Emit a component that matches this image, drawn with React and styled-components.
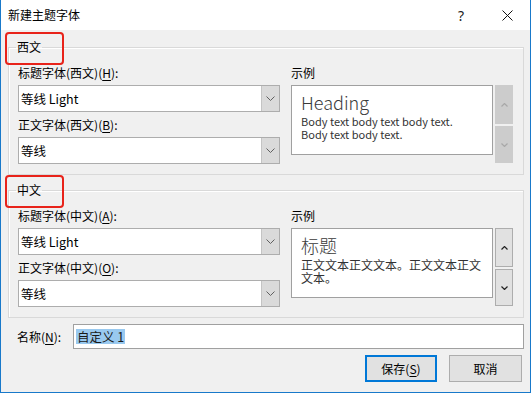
import React from "react";
import styled, { createGlobalStyle } from "styled-components";

const Global = createGlobalStyle`
  html, body { margin: 0; padding: 0; background: #ffffff; }
  body { font-family: "Noto Sans CJK SC", "Noto Sans", sans-serif; font-size: 12px; color: #000; }
  * { box-sizing: border-box; }
`;

const Window = styled.div`
  width: 531px;
  height: 393px;
  display: flex;
  flex-direction: column;
  border-left: 1px solid #1979ca;
  border-right: 1px solid #1979ca;
  border-bottom: 1px solid #1979ca;
  background: #f0f0f0;
`;

const TitleBar = styled.div`
  height: 30px;
  flex: none;
  display: flex;
  align-items: center;
  background: #ffffff;
  padding-left: 7px;
`;

const Title = styled.div`
  flex: 1;
  font-size: 12px;
  line-height: 16px;
  color: #000;
`;

const TitleButton = styled.div`
  width: 46px;
  height: 30px;
  display: flex;
  align-items: center;
  justify-content: center;
  font-family: "Noto Sans", sans-serif;
  font-size: 14px;
  color: #222;
`;

const Body = styled.div`
  flex: 1;
  display: flex;
  flex-direction: column;
  padding: 9px 6px 10px 7px;
`;

const Group = styled.fieldset`
  margin: ${(p) => (p.$first ? "0" : "7px 0 0 0")};
  padding: 0 10px 10px 9px;
  border: 1px solid #d9d9d9;
  box-shadow: inset 1px 1px 0 #ffffff;
  min-inline-size: 0;
`;

const Legend = styled.legend`
  position: relative;
  margin-left: -2px;
  padding: 0 1px;
  font-size: 12px;
  line-height: 16px;
  color: #000;
  &::before {
    content: "";
    position: absolute;
    left: -11px;
    top: -7px;
    width: 55px;
    height: 29px;
    border: 2px solid #e8231a;
    border-radius: 4px;
  }
`;

const Columns = styled.div`
  display: grid;
  grid-template-columns: 262px 1fr;
  column-gap: 11px;
`;

const Column = styled.div`
  display: flex;
  flex-direction: column;
`;

const FieldLabel = styled.div`
  font-size: 12px;
  line-height: 16px;
  margin-top: ${(p) => (p.$first ? "10px" : "5px")};
  margin-bottom: 4px;
  white-space: nowrap;
  color: #000;
`;

const U = styled.span`
  text-decoration: underline;
  text-underline-offset: 2px;
`;

const Combo = styled.div`
  height: 27px;
  display: flex;
  border: 1px solid #adadad;
  background: #ffffff;
`;

const ComboText = styled.div`
  flex: 1;
  display: flex;
  align-items: center;
  padding-left: 2px;
  font-size: 12.5px;
  color: #000;
`;

const DropButton = styled.div`
  width: 18px;
  display: flex;
  align-items: center;
  justify-content: center;
  background: #dadada;
  border-left: 1px solid #c4c4c4;
`;

const PreviewRow = styled.div`
  display: flex;
  gap: 2px;
`;

const Preview = styled.div`
  width: 202px;
  height: 70px;
  background: #ffffff;
  border: 1px solid #a0a0a0;
  padding: 5px 8px 0 9px;
  color: #333;
`;

const PreviewHeading = styled.div`
  font-size: 18px;
  line-height: 22px;
  font-weight: 300;
  color: #3a3a3a;
`;

const PreviewBody = styled.div`
  font-size: ${(p) => (p.$cjk ? "12px" : "11px")};
  line-height: 13px;
  margin-top: 2px;
  color: #333;
`;

const ScrollCol = styled.div`
  width: 18px;
  display: flex;
  flex-direction: column;
  gap: 2px;
`;

const ScrollButton = styled.div`
  height: ${(p) => p.$h}px;
  display: flex;
  align-items: center;
  justify-content: center;
  background: ${(p) => (p.$disabled ? "#cccccc" : "#e1e1e1")};
  border: 1px solid ${(p) => (p.$disabled ? "#cccccc" : "#adadad")};
`;

const NameRow = styled.div`
  display: flex;
  align-items: center;
  margin-top: 6px;
`;

const NameLabel = styled.div`
  width: 65px;
  padding-left: 9px;
  font-size: 12px;
  white-space: nowrap;
`;

const NameInput = styled.div`
  flex: 1;
  height: 25px;
  display: flex;
  align-items: center;
  padding-left: 2px;
  background: #ffffff;
  border: 1px solid #a0a0a0;
`;

const Selected = styled.span`
  background: #99c9ef;
  font-size: 12.5px;
  line-height: 15px;
  padding: 0 1px;
  color: #1a1a1a;
`;

const ButtonRow = styled.div`
  display: flex;
  justify-content: flex-end;
  gap: 12px;
  margin-top: 6px;
  padding-right: 2px;
`;

const Button = styled.div`
  width: ${(p) => (p.$primary ? "72px" : "73px")};
  height: 27px;
  display: flex;
  align-items: center;
  justify-content: center;
  background: #e1e1e1;
  border: ${(p) => (p.$primary ? "2px solid #0078d7" : "1px solid #adadad")};
  font-size: 12px;
  color: #000;
`;

const ComboChevron = () => (
  <svg width="9" height="5" viewBox="0 0 9 5">
    <polyline points="0.5,0.5 4.5,4.5 8.5,0.5" fill="none" stroke="#606060" strokeWidth="1" />
  </svg>
);

const Chevron = ({ up, color }) => (
  <svg width="7" height="4" viewBox="0 0 7 4">
    <polyline
      points={up ? "0.5,3.5 3.5,0.5 6.5,3.5" : "0.5,0.5 3.5,3.5 6.5,0.5"}
      fill="none"
      stroke={color}
      strokeWidth="1.2"
    />
  </svg>
);

const CloseIcon = () => (
  <svg width="11" height="11" viewBox="0 0 11 11">
    <line x1="0.5" y1="0.5" x2="10.5" y2="10.5" stroke="#111" strokeWidth="1" />
    <line x1="10.5" y1="0.5" x2="0.5" y2="10.5" stroke="#111" strokeWidth="1" />
  </svg>
);

const ComboBox = ({ value }) => (
  <Combo>
    <ComboText>{value}</ComboText>
    <DropButton>
      <ComboChevron />
    </DropButton>
  </Combo>
);

const Section = ({ first, title, lang, k1, k2, heading, body, cjk, disabled }) => (
  <Group $first={first}>
    <Legend>{title}</Legend>
    <Columns>
      <Column>
        <FieldLabel $first>
          标题字体({lang})(<U>{k1}</U>):
        </FieldLabel>
        <ComboBox value="等线 Light" />
        <FieldLabel>
          正文字体({lang})(<U>{k2}</U>):
        </FieldLabel>
        <ComboBox value="等线" />
      </Column>
      <Column>
        <FieldLabel $first>示例</FieldLabel>
        <PreviewRow>
          <Preview>
            <PreviewHeading>{heading}</PreviewHeading>
            <PreviewBody $cjk={cjk}>{body}</PreviewBody>
          </Preview>
          <ScrollCol>
            <ScrollButton $disabled={disabled} $h={39}>
              <Chevron up color={disabled ? "#a8a8a8" : "#222"} />
            </ScrollButton>
            <ScrollButton $disabled={disabled} $h={37}>
              <Chevron color={disabled ? "#a8a8a8" : "#222"} />
            </ScrollButton>
          </ScrollCol>
        </PreviewRow>
      </Column>
    </Columns>
  </Group>
);

export default function App() {
  return (
    <>
      <Global />
      <Window>
        <TitleBar>
          <Title>新建主题字体</Title>
          <TitleButton>?</TitleButton>
          <TitleButton>
            <CloseIcon />
          </TitleButton>
        </TitleBar>
        <Body>
          <Section
            first
            title="西文"
            lang="西文"
            k1="H"
            k2="B"
            heading="Heading"
            body={
              <>
                Body text body text body text.
                <br />
                Body text body text.
              </>
            }
            disabled
          />
          <Section
            title="中文"
            lang="中文"
            k1="A"
            k2="O"
            heading="标题"
            body="正文文本正文文本。正文文本正文文本。"
            cjk
          />
          <NameRow>
            <NameLabel>
              名称(<U>N</U>):
            </NameLabel>
            <NameInput>
              <Selected>自定义 1</Selected>
            </NameInput>
          </NameRow>
          <ButtonRow>
            <Button $primary>
              保存(<U>S</U>)
            </Button>
            <Button>取消</Button>
          </ButtonRow>
        </Body>
      </Window>
    </>
  );
}
